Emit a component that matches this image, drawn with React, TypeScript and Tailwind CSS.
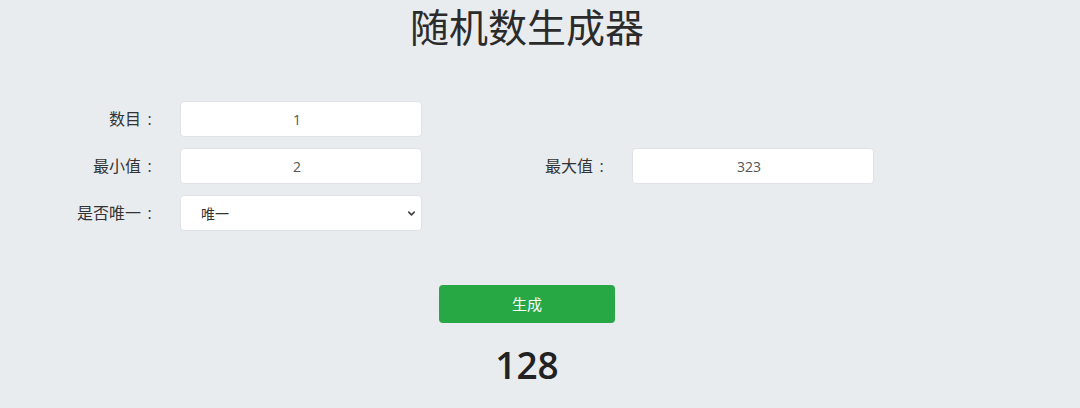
import { ChevronDown } from "lucide-react";

const font = { fontFamily: '"Open Sans", "Noto Sans CJK SC", sans-serif' };

function Label({ text, className }: { text: string; className: string }) {
  return (
    <label className={`flex justify-end text-[16px] text-[#333] ${className}`}>
      <span>{text}</span>
      <span className="inline-block w-[17px] text-center">:</span>
    </label>
  );
}

function Field({ value, className = "ml-[22px]" }: { value: string; className?: string }) {
  return (
    <input
      readOnly
      value={value}
      className={`h-[36px] w-[242px] rounded-[4px] border border-[#dfe3e8] bg-white pr-[8px] text-center text-[14px] text-[#555] outline-none ${className}`}
    />
  );
}

export default function App() {
  return (
    <div className="h-[408px] w-[1080px] bg-[#e9ecef] text-[#333]" style={font}>
      <div className="flex w-[1054px] flex-col">
        {/* Title */}
        <h1 className="pt-[3px] text-center text-[39px] leading-[47px] font-normal text-[#2b2b2b]">
          随机数生成器
        </h1>

        {/* Form */}
        <div className="mt-[51px] flex flex-col gap-[11px]">
          <div className="flex items-center">
            <Label text="数目" className="w-[158px]" />
            <Field value="1" />
          </div>
          <div className="flex items-center">
            <Label text="最小值" className="w-[158px]" />
            <Field value="2" />
            <Label text="最大值" className="w-[188px]" />
            <Field value="323" className="ml-[22px]" />
          </div>
          <div className="flex items-center">
            <Label text="是否唯一" className="w-[158px]" />
            <div className="relative ml-[22px] h-[36px] w-[242px]">
              <select className="h-full w-full appearance-none rounded-[4px] border border-[#dfe3e8] bg-white pl-[20px] text-[14px] text-[#333] outline-none">
                <option>唯一</option>
                <option>不唯一</option>
              </select>
              <ChevronDown
                className="pointer-events-none absolute top-[13px] right-[5px] h-[11px] w-[11px] text-[#444]"
                strokeWidth={3.5}
              />
            </div>
          </div>
        </div>

        {/* Action */}
        <div className="mt-[54px] flex flex-col items-center">
          <button className="h-[38px] w-[176px] rounded-[4px] bg-[#28a745] text-[15px] text-white">
            生成
          </button>
          <div className="mt-[17px] text-[37px] leading-[50px] font-semibold text-[#222]">128</div>
        </div>
      </div>
    </div>
  );
}
